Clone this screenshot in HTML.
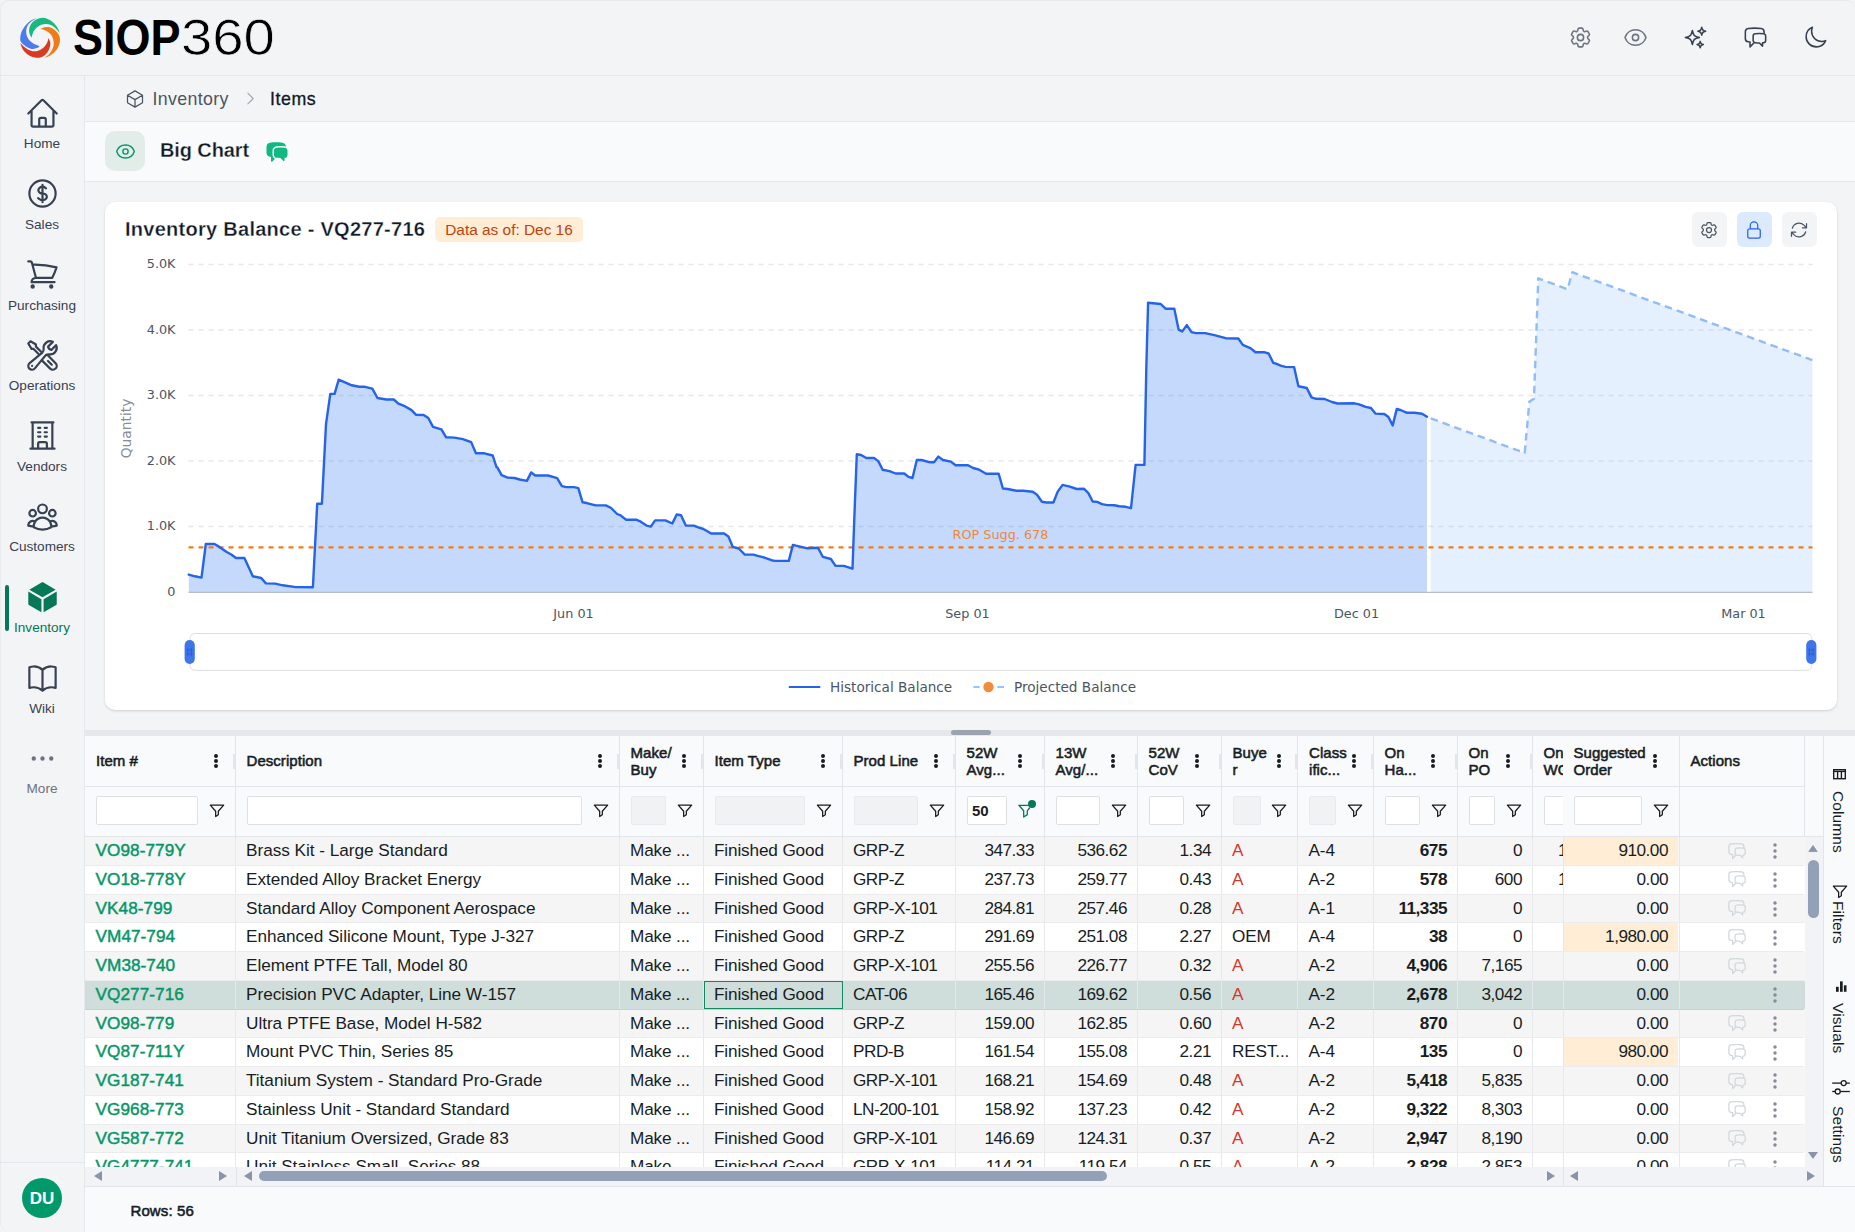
<!DOCTYPE html><html lang="en"><head><meta charset="utf-8"><title>SIOP360 - Inventory Items</title><style>
*{box-sizing:border-box;margin:0;padding:0}
html,body{width:1855px;height:1232px;overflow:hidden;background:#f3f4f6}
body{font-family:"Liberation Sans",sans-serif;color:#111827;position:relative}
.abs{position:absolute}
.ic{position:absolute;display:block;overflow:visible}
.t{position:absolute;white-space:nowrap;line-height:1}
#hdr{left:0;top:0;width:1855px;height:76px;border-bottom:1px solid #e5e7eb;background:#f3f4f6}
#side{left:0;top:76px;width:85px;height:1156px;border-right:1px solid #e5e7eb;background:#f3f4f6}
#crumb{left:85px;top:76px;width:1770px;height:46px;border-bottom:1px solid #e5e7eb;background:#f3f4f6}
#tbar{left:85px;top:122px;width:1770px;height:60px;border-bottom:1px solid #e5e7eb;background:#f9fafb}
#card{left:105px;top:202px;width:1732px;height:507.5px;background:#fff;border-radius:10px;box-shadow:0 1px 3px rgba(0,0,0,.10),0 1px 2px rgba(0,0,0,.06)}
.nl{position:absolute;left:0;width:84px;text-align:center;font-size:13.6px;line-height:16px;color:#374151;letter-spacing:0}
.cbtn{position:absolute;width:35px;height:35px;border-radius:6px;background:#f3f4f6}
.dj{font-family:"DejaVu Sans",sans-serif}
#grid{left:85px;top:736px;width:1738px;height:451px;background:#fff;overflow:hidden;font-size:17.2px;color:#181d1f}
.hc{position:absolute;top:0;height:51px;background:#f9fafb;border-right:1px solid #e2e5ea;border-bottom:1px solid #e2e5ea;font-size:15px;font-weight:400;-webkit-text-stroke:.55px #181d1f;line-height:17.2px;color:#181d1f;overflow:hidden}
.hc .lb{position:absolute;left:11px;top:0;height:50px;display:flex;align-items:center;white-space:pre;letter-spacing:.05px}
.hc .rz{position:absolute;right:0;top:17.5px;width:2px;height:15px;background:#e2e5ea}
.fc{position:absolute;top:51px;height:50px;background:#f9fafb;border-right:1px solid #e2e5ea;border-bottom:1px solid #e2e5ea;overflow:hidden}
.fi{position:absolute;left:11px;top:8.6px;height:29.6px;border:1px solid #dde1e6;border-radius:2px;background:#fff;font-size:15px;font-weight:700;line-height:28.6px;padding-left:4.5px;color:#181d1f}
.fi.dis{background:#f1f2f4;border-color:#e8eaed}
.row{position:absolute;left:0;width:1719px;height:28.75px}
.c{position:absolute;top:0;height:100%;border-right:1px solid #e6e8ec;padding:0 9.5px 0 10.5px;white-space:nowrap;overflow:hidden;line-height:27.9px;letter-spacing:-.15px}
.r{text-align:right;letter-spacing:-.5px}
.b{font-weight:700}
.pl{letter-spacing:-.5px}
.d{letter-spacing:-.03px}
.wo{padding-left:25.5px}
.g{color:#059669;font-weight:400;-webkit-text-stroke:.45px #059669;letter-spacing:.05px}
.red{color:#d4382c}
.sg{background:#ffedd5}
</style></head><body>
<div id="hdr" class="abs">
<svg class="ic" style="left:14px;top:12px;width:52px;height:52px" viewBox="0 0 1232 1232"><path d="M815,615C822,632 854,684 860,720C866,756 860,793 850,830C840,867 822,907 800,940C778,973 750,1007 720,1030C690,1053 657,1072 620,1080C583,1088 540,1087 500,1080C460,1073 418,1060 380,1040C342,1020 302,992 270,960C238,928 210,888 190,850C170,812 157,750 150,730C163,745 200,793 230,820C260,847 293,872 330,890C367,908 410,925 450,930C490,935 532,932 570,920C608,908 648,885 680,860C712,835 740,798 760,770C780,742 791,716 800,690C809,664 812,628 815,615Z" fill="#d93a24"/><path d="M620,405C637,398 682,368 720,360C758,352 810,350 850,360C890,370 927,393 960,420C993,447 1028,482 1050,520C1072,558 1088,603 1090,650C1092,697 1078,753 1060,800C1042,847 1013,892 980,930C947,968 903,1004 860,1030C817,1056 743,1076 720,1085C738,1071 800,1031 830,1000C860,969 882,937 900,900C918,863 935,822 940,780C945,738 940,690 930,650C920,610 903,572 880,540C857,508 820,480 790,460C760,440 728,429 700,420C672,411 633,408 620,405Z" fill="#f07c18"/><path d="M415,610C406,588 366,527 360,480C354,433 360,375 380,330C400,285 443,240 480,210C517,180 560,162 600,150C640,138 678,133 720,140C762,147 810,167 850,190C890,213 928,247 960,280C992,313 1019,353 1040,390C1061,427 1078,482 1085,500C1071,483 1031,430 1000,400C969,370 937,339 900,320C863,301 822,288 780,285C738,282 690,286 650,300C610,314 572,342 540,370C508,398 481,430 460,470C439,510 422,587 415,610Z" fill="#18b880"/><path d="M540,148C517,157 445,171 400,200C355,229 307,275 270,320C233,365 200,423 180,470C160,517 153,562 150,600C147,638 142,667 160,700C178,733 220,772 260,800C300,828 357,860 400,870C443,880 485,869 520,860C555,851 595,822 610,815C583,802 495,769 450,740C405,711 367,680 340,640C313,600 295,548 290,500C285,452 292,395 310,350C328,305 362,264 400,230C438,196 517,162 540,148Z" fill="#4a7cec"/></svg>
<div class="t" id="lg1" style="left:73px;top:10px;font-size:50px;line-height:56px;color:#000;font-weight:700;transform-origin:0 50%;transform:scaleX(.9)">SIOP</div>
<div class="t" id="lg2" style="left:181px;top:10px;font-size:50px;line-height:56px;color:#000;-webkit-text-stroke:.7px #f3f4f6;letter-spacing:0px;transform-origin:0 50%;transform:scaleX(1.125)">360</div>
<svg class="ic" style="left:1567.90px;top:25.00px;width:25px;height:25px" viewBox="0 0 24 24" fill="none" stroke="#6b7280" stroke-width="1.5" stroke-linecap="round" stroke-linejoin="round" ><path d="M9.594 3.94c.09-.542.56-.94 1.11-.94h2.593c.55 0 1.02.398 1.11.94l.213 1.281c.063.374.313.686.645.87.074.04.147.083.22.127.324.196.72.257 1.075.124l1.217-.456a1.125 1.125 0 011.37.49l1.296 2.247a1.125 1.125 0 01-.26 1.431l-1.003.827c-.293.24-.438.613-.431.992a6.759 6.759 0 010 .255c-.007.378.138.75.43.99l1.005.828c.424.35.534.954.26 1.43l-1.298 2.247a1.125 1.125 0 01-1.369.491l-1.217-.456c-.355-.133-.75-.072-1.076.124a6.57 6.57 0 01-.22.128c-.331.183-.581.495-.644.869l-.213 1.28c-.09.543-.56.941-1.11.941h-2.594c-.55 0-1.02-.398-1.11-.94l-.213-1.281c-.062-.374-.312-.686-.644-.87a6.52 6.52 0 01-.22-.127c-.325-.196-.72-.257-1.076-.124l-1.217.456a1.125 1.125 0 01-1.369-.49l-1.297-2.247a1.125 1.125 0 01.26-1.431l1.004-.827c.292-.24.437-.613.43-.992a6.932 6.932 0 010-.255c.007-.378-.138-.75-.43-.99l-1.004-.828a1.125 1.125 0 01-.26-1.43l1.297-2.247a1.125 1.125 0 011.37-.491l1.216.456c.356.133.751.072 1.076-.124.072-.044.146-.087.22-.128.332-.183.582-.495.644-.869l.214-1.281zM15 12a3 3 0 11-6 0 3 3 0 016 0z"/></svg>
<svg class="ic" style="left:1622.90px;top:25.00px;width:25px;height:25px" viewBox="0 0 24 24" fill="none" stroke="#6b7280" stroke-width="1.5" stroke-linecap="round" stroke-linejoin="round" ><path d="M2.036 12.322a1.012 1.012 0 010-.639C3.423 7.51 7.36 4.5 12 4.5c4.638 0 8.573 3.007 9.963 7.178.07.207.07.431 0 .639C20.577 16.49 16.64 19.5 12 19.5c-4.638 0-8.573-3.007-9.963-7.178zM15 12a3 3 0 11-6 0 3 3 0 016 0z"/></svg>
<svg class="ic" style="left:1682.90px;top:25.00px;width:25px;height:25px" viewBox="0 0 24 24" fill="none" stroke="#374151" stroke-width="1.5" stroke-linecap="round" stroke-linejoin="round" ><path d="M9.813 15.904L9 18.75l-.813-2.846a4.5 4.5 0 00-3.09-3.09L2.25 12l2.846-.813a4.5 4.5 0 003.09-3.09L9 5.25l.813 2.846a4.5 4.5 0 003.09 3.09L15.75 12l-2.846.813a4.5 4.5 0 00-3.09 3.09zM18.259 8.715L18 9.75l-.259-1.035a3.375 3.375 0 00-2.455-2.456L14.25 6l1.036-.259a3.375 3.375 0 002.455-2.456L18 2.25l.259 1.035a3.375 3.375 0 002.456 2.456L21.75 6l-1.035.259a3.375 3.375 0 00-2.456 2.456zM16.894 20.567L16.5 21.75l-.394-1.183a2.25 2.25 0 00-1.423-1.423L13.5 18.75l1.183-.394a2.25 2.25 0 001.423-1.423l.394-1.183.394 1.183a2.25 2.25 0 001.423 1.423l1.183.394-1.183.394a2.25 2.25 0 00-1.423 1.423z"/></svg>
<svg class="ic" style="left:1743.00px;top:25.00px;width:25px;height:25px" viewBox="0 0 24 24" fill="none" stroke="#374151" stroke-width="1.5" stroke-linecap="round" stroke-linejoin="round" ><path d="M20.25 8.511c.884.284 1.5 1.128 1.5 2.097v4.286c0 1.136-.847 2.1-1.98 2.193-.34.027-.68.052-1.02.072v3.091l-3-3c-1.354 0-2.694-.055-4.02-.163a2.115 2.115 0 01-.825-.242m9.345-8.334a2.126 2.126 0 00-.476-.095 48.64 48.64 0 00-8.048 0c-1.131.094-1.976 1.057-1.976 2.192v4.286c0 .837.46 1.58 1.155 1.951m9.345-8.334V6.637c0-1.621-1.152-3.026-2.76-3.235A48.455 48.455 0 0011.25 3c-2.115 0-4.198.137-6.24.402-1.608.209-2.76 1.614-2.76 3.235v6.226c0 1.621 1.152 3.026 2.76 3.235.577.075 1.157.14 1.74.194V21l4.155-4.155"/></svg>
<svg class="ic" style="left:1802.50px;top:25.00px;width:25px;height:25px" viewBox="0 0 24 24" fill="none" stroke="#374151" stroke-width="1.5" stroke-linecap="round" stroke-linejoin="round" ><path d="M21.752 15.002A9.718 9.718 0 0118 15.75c-5.385 0-9.75-4.365-9.75-9.75 0-1.33.266-2.597.748-3.752A9.753 9.753 0 003 11.25C3 16.635 7.365 21 12.75 21a9.753 9.753 0 009.002-5.998z"/></svg>
</div>
<div id="side" class="abs">
<svg class="ic" style="left:24.50px;top:19.60px;width:35px;height:35px" viewBox="0 0 24 24" fill="none" stroke="#374151" stroke-width="1.5" stroke-linecap="round" stroke-linejoin="round" ><path d="M2.25 12l8.954-8.955c.44-.439 1.152-.439 1.591 0L21.75 12M4.5 9.75v10.125c0 .621.504 1.125 1.125 1.125H9.75v-4.875c0-.621.504-1.125 1.125-1.125h2.25c.621 0 1.125.504 1.125 1.125V21h4.125c.621 0 1.125-.504 1.125-1.125V9.75M8.25 21h8.25"/></svg>
<div class="nl" style="top:60.4px;color:#374151">Home</div>
<svg class="ic" style="left:24.50px;top:100.30px;width:35px;height:35px" viewBox="0 0 24 24" fill="none" stroke="#374151" stroke-width="1.5" stroke-linecap="round" stroke-linejoin="round" ><path d="M12 6v12m-3-2.818l.879.659c1.171.879 3.07.879 4.242 0 1.172-.879 1.172-2.303 0-3.182C13.536 12.219 12.768 12 12 12c-.725 0-1.45-.22-2.003-.659-1.106-.879-1.106-2.303 0-3.182s2.9-.879 4.006 0l.415.33M21 12a9 9 0 11-18 0 9 9 0 0118 0z"/></svg>
<div class="nl" style="top:141.0px;color:#374151">Sales</div>
<svg class="ic" style="left:24.50px;top:181.00px;width:35px;height:35px" viewBox="0 0 24 24" fill="none" stroke="#374151" stroke-width="1.5" stroke-linecap="round" stroke-linejoin="round" ><path d="M2.25 3h1.386c.51 0 .955.343 1.087.835l.383 1.437M7.5 14.25a3 3 0 00-3 3h15.75m-12.75-3h11.218c1.121-2.3 2.1-4.684 2.924-7.138a60.114 60.114 0 00-16.536-1.84M7.5 14.25L5.106 5.272M6 20.25a.75.75 0 11-1.5 0 .75.75 0 011.5 0zm12.75 0a.75.75 0 11-1.5 0 .75.75 0 011.5 0z"/></svg>
<div class="nl" style="top:221.6px;color:#374151">Purchasing</div>
<svg class="ic" style="left:24.50px;top:261.70px;width:35px;height:35px" viewBox="0 0 24 24" fill="none" stroke="#374151" stroke-width="1.5" stroke-linecap="round" stroke-linejoin="round" ><path d="M11.42 15.17L17.25 21A2.652 2.652 0 0021 17.25l-5.877-5.877M11.42 15.17l2.496-3.03c.317-.384.74-.626 1.208-.766M11.42 15.17l-4.655 5.653a2.548 2.548 0 11-3.586-3.586l6.837-5.63m5.108-.233c.55-.164 1.163-.188 1.743-.14a4.5 4.5 0 004.486-6.336l-3.276 3.277a3.004 3.004 0 01-2.25-2.25l3.276-3.276a4.5 4.5 0 00-6.336 4.486c.091 1.076-.071 2.264-.904 2.95l-.102.085m-1.745 1.437L5.909 7.5H4.5L2.25 3.75l1.5-1.5L7.5 4.5v1.409l4.26 4.26m-1.745 1.437l1.745-1.437m6.615 8.206L15.75 15.75M4.867 19.125h.008v.008h-.008v-.008z"/></svg>
<div class="nl" style="top:302.1px;color:#374151">Operations</div>
<svg class="ic" style="left:24.50px;top:342.40px;width:35px;height:35px" viewBox="0 0 24 24" fill="none" stroke="#374151" stroke-width="1.5" stroke-linecap="round" stroke-linejoin="round" ><path d="M3.75 21h16.5M4.5 3h15M5.25 3v18m13.5-18v18M9 6.75h1.5m-1.5 3h1.5m-1.5 3h1.5m3-6H15m-1.5 3H15m-1.5 3H15M9 21v-3.375c0-.621.504-1.125 1.125-1.125h3.75c.621 0 1.125.504 1.125 1.125V21"/></svg>
<div class="nl" style="top:382.7px;color:#374151">Vendors</div>
<svg class="ic" style="left:24.50px;top:423.10px;width:35px;height:35px" viewBox="0 0 24 24" fill="none" stroke="#374151" stroke-width="1.5" stroke-linecap="round" stroke-linejoin="round" ><path d="M18 18.72a9.094 9.094 0 003.741-.479 3 3 0 00-4.682-2.72m.94 3.198l.001.031c0 .225-.012.447-.037.666A11.944 11.944 0 0112 21c-2.17 0-4.207-.576-5.963-1.584A6.062 6.062 0 016 18.719m12 0a5.971 5.971 0 00-.941-3.197m0 0A5.995 5.995 0 0012 12.75a5.995 5.995 0 00-5.058 2.772m0 0a3 3 0 00-4.681 2.72 8.986 8.986 0 003.74.477m.94-3.197a5.971 5.971 0 00-.94 3.197M15 6.75a3 3 0 11-6 0 3 3 0 016 0zm6 3a2.25 2.25 0 11-4.5 0 2.25 2.25 0 014.5 0zm-13.5 0a2.25 2.25 0 11-4.5 0 2.25 2.25 0 014.5 0z"/></svg>
<div class="nl" style="top:463.3px;color:#374151">Customers</div>
<svg class="ic" style="left:24.50px;top:503.80px;width:35px;height:35px" viewBox="0 0 24 24" fill="#047857" fill-rule="evenodd" ><path d="M12.378 1.602a.75.75 0 00-.756 0L3 6.632l9 5.25 9-5.25-8.622-5.03zM21.75 7.93l-9 5.25v9l8.628-5.032a.75.75 0 00.372-.648V7.93zM11.25 22.18v-9l-9-5.25v8.57a.75.75 0 00.372.648l8.628 5.033z"/></svg>
<div class="nl" style="top:543.9px;color:#047857">Inventory</div>
<div class="abs" style="left:5px;top:509.3px;width:4px;height:46px;border-radius:2px;background:#047857"></div>
<svg class="ic" style="left:24.50px;top:584.50px;width:35px;height:35px" viewBox="0 0 24 24" fill="none" stroke="#374151" stroke-width="1.5" stroke-linecap="round" stroke-linejoin="round" ><path d="M12 6.042A8.967 8.967 0 006 3.75c-1.052 0-2.062.18-3 .512v14.25A8.987 8.987 0 016 18c2.305 0 4.408.867 6 2.292m0-14.25a8.966 8.966 0 016-2.292c1.052 0 2.062.18 3 .512v14.25A8.987 8.987 0 0018 18a8.967 8.967 0 00-6 2.292m0-14.25v14.25"/></svg>
<div class="nl" style="top:624.5px;color:#374151">Wiki</div>
<svg class="ic" style="fill:#6b7280;left:24.50px;top:664.90px;width:35px;height:35px" viewBox="0 0 24 24" fill="none" stroke="#6b7280" stroke-width="1.5" stroke-linecap="round" stroke-linejoin="round"><path d="M6.75 12a.75.75 0 11-1.5 0 .75.75 0 011.5 0zM12.75 12a.75.75 0 11-1.5 0 .75.75 0 011.5 0zM18.75 12a.75.75 0 11-1.5 0 .75.75 0 011.5 0z"/></svg>
<div class="nl" style="top:705.0px;color:#6b7280">More</div>
<div class="abs" style="left:0;top:1086px;width:84px;height:1px;background:#e5e7eb"></div>
<div class="abs" style="left:22px;top:1102px;width:40px;height:40px;border-radius:50%;background:#019969;color:#fff;font-weight:700;font-size:17px;line-height:42px;text-align:center">DU</div>
</div>
<div id="crumb" class="abs">
<svg class="ic" style="left:40.00px;top:13.00px;width:20px;height:20px" viewBox="0 0 24 24" fill="none" stroke="#4b5563" stroke-width="1.5" stroke-linecap="round" stroke-linejoin="round" ><path d="M21 7.5l-9-5.25L3 7.5m18 0l-9 5.25m9-5.25v9l-9 5.25M3 7.5l9 5.25M3 7.5v9l9 5.25m0-9v9"/></svg>
<div class="t" id="bc1" style="left:67.5px;top:14px;font-size:17.8px;line-height:18px;color:#4b5563;letter-spacing:.35px">Inventory</div>
<svg class="ic" style="left:156.50px;top:14.00px;width:17px;height:17px" viewBox="0 0 24 24" fill="none" stroke="#9ca3af" stroke-width="1.5" stroke-linecap="round" stroke-linejoin="round" ><path d="M8.25 4.5l7.5 7.5-7.5 7.5"/></svg>
<div class="t" id="bc2" style="left:185px;top:14px;font-size:17.8px;line-height:18px;color:#111827;letter-spacing:.55px;-webkit-text-stroke:.3px #111827">Items</div>
</div>
<div id="tbar" class="abs">
<div class="abs" style="left:20px;top:9px;width:40px;height:40px;border-radius:10px;background:#e2ece9"></div>
<svg class="ic" style="left:29.50px;top:18.50px;width:21px;height:21px" viewBox="0 0 24 24" fill="none" stroke="#059669" stroke-width="1.6" stroke-linecap="round" stroke-linejoin="round" ><path d="M2.036 12.322a1.012 1.012 0 010-.639C3.423 7.51 7.36 4.5 12 4.5c4.638 0 8.573 3.007 9.963 7.178.07.207.07.431 0 .639C20.577 16.49 16.64 19.5 12 19.5c-4.638 0-8.573-3.007-9.963-7.178zM15 12a3 3 0 11-6 0 3 3 0 016 0z"/></svg>
<div class="t" id="bigchart" style="left:75px;top:17.2px;-webkit-text-stroke:.3px #f9fafb;font-size:20px;line-height:22px;font-weight:700;color:#111827;letter-spacing:-.1px">Big Chart</div>
<svg class="ic" style="left:180.30px;top:17.50px;width:24px;height:24px" viewBox="0 0 24 24" fill="#10b981" fill-rule="evenodd" ><path d="M4.913 2.658c2.075-.27 4.19-.408 6.337-.408 2.147 0 4.262.139 6.337.408 1.922.25 3.291 1.861 3.405 3.727a4.403 4.403 0 00-1.032-.211 50.89 50.89 0 00-8.42 0c-2.358.196-4.04 2.19-4.04 4.434v4.286a4.47 4.47 0 002.433 3.984L7.28 21.53A.75.75 0 016 21v-4.03a48.527 48.527 0 01-1.087-.128C2.905 16.58 1.5 14.833 1.5 12.862V6.638c0-1.97 1.405-3.718 3.413-3.979zM15.75 7.5c-1.376 0-2.739.057-4.086.169C10.124 7.797 9 9.103 9 10.609v4.285c0 1.507 1.128 2.814 2.67 2.94 1.243.102 2.5.157 3.768.165l2.782 2.781a.75.75 0 001.28-.53v-2.39l.33-.026c1.542-.125 2.67-1.433 2.67-2.94v-4.286c0-1.505-1.125-2.811-2.664-2.94A49.392 49.392 0 0015.75 7.5z"/></svg>
</div>
<div id="card" class="abs">
<div class="t" id="ctitle" style="left:20px;top:16.4px;-webkit-text-stroke:.3px #fff;font-size:20px;line-height:22px;font-weight:700;color:#111827;letter-spacing:.27px">Inventory Balance - VQ277-716</div>
<div class="abs" id="badge" style="left:330px;top:15px;width:148px;height:25px;border-radius:5px;background:#ffedd5;color:#c2410c;font-size:15.4px;line-height:25px;text-align:center;white-space:nowrap">Data as of: Dec 16</div>
<div class="cbtn" style="left:1586.75px;top:10px;background:#f3f4f6"></div>
<svg class="ic" style="left:1594.25px;top:17.50px;width:20px;height:20px" viewBox="0 0 24 24" fill="none" stroke="#4b5563" stroke-width="1.5" stroke-linecap="round" stroke-linejoin="round" ><path d="M9.594 3.94c.09-.542.56-.94 1.11-.94h2.593c.55 0 1.02.398 1.11.94l.213 1.281c.063.374.313.686.645.87.074.04.147.083.22.127.324.196.72.257 1.075.124l1.217-.456a1.125 1.125 0 011.37.49l1.296 2.247a1.125 1.125 0 01-.26 1.431l-1.003.827c-.293.24-.438.613-.431.992a6.759 6.759 0 010 .255c-.007.378.138.75.43.99l1.005.828c.424.35.534.954.26 1.43l-1.298 2.247a1.125 1.125 0 01-1.369.491l-1.217-.456c-.355-.133-.75-.072-1.076.124a6.57 6.57 0 01-.22.128c-.331.183-.581.495-.644.869l-.213 1.28c-.09.543-.56.941-1.11.941h-2.594c-.55 0-1.02-.398-1.11-.94l-.213-1.281c-.062-.374-.312-.686-.644-.87a6.52 6.52 0 01-.22-.127c-.325-.196-.72-.257-1.076-.124l-1.217.456a1.125 1.125 0 01-1.369-.49l-1.297-2.247a1.125 1.125 0 01.26-1.431l1.004-.827c.292-.24.437-.613.43-.992a6.932 6.932 0 010-.255c.007-.378-.138-.75-.43-.99l-1.004-.828a1.125 1.125 0 01-.26-1.43l1.297-2.247a1.125 1.125 0 011.37-.491l1.216.456c.356.133.751.072 1.076-.124.072-.044.146-.087.22-.128.332-.183.582-.495.644-.869l.214-1.281zM15 12a3 3 0 11-6 0 3 3 0 016 0z"/></svg>
<div class="cbtn" style="left:1631.75px;top:10px;background:#dbeafe"></div>
<svg class="ic" style="left:1639.25px;top:17.50px;width:20px;height:20px" viewBox="0 0 24 24" fill="none" stroke="#2563eb" stroke-width="1.5" stroke-linecap="round" stroke-linejoin="round" ><path d="M16.5 10.5V6.75a4.5 4.5 0 10-9 0v3.75m-.75 11.25h10.5a2.25 2.25 0 002.25-2.25v-6.75a2.25 2.25 0 00-2.25-2.25H6.75a2.25 2.25 0 00-2.25 2.25v6.75a2.25 2.25 0 002.25 2.25z"/></svg>
<div class="cbtn" style="left:1676.75px;top:10px;background:#f3f4f6"></div>
<svg class="ic" style="left:1684.25px;top:17.50px;width:20px;height:20px" viewBox="0 0 24 24" fill="none" stroke="#4b5563" stroke-width="1.5" stroke-linecap="round" stroke-linejoin="round" ><path d="M16.023 9.348h4.992v-.001M2.985 19.644v-4.992m0 0h4.992m-4.993 0l3.181 3.183a8.25 8.25 0 0013.803-3.7M4.031 9.865a8.25 8.25 0 0113.803-3.7l3.181 3.182m0-4.991v4.99"/></svg>
</div>
<svg class="ic" style="left:0;top:0;width:1855px;height:1232px;pointer-events:none" viewBox="0 0 1855 1232">
<line x1="188.5" x2="1812.5" y1="526.5" y2="526.5" stroke="#e5e7eb" stroke-width="1.3" stroke-dasharray="5 5"/>
<line x1="188.5" x2="1812.5" y1="461.0" y2="461.0" stroke="#e5e7eb" stroke-width="1.3" stroke-dasharray="5 5"/>
<line x1="188.5" x2="1812.5" y1="395.5" y2="395.5" stroke="#e5e7eb" stroke-width="1.3" stroke-dasharray="5 5"/>
<line x1="188.5" x2="1812.5" y1="330.0" y2="330.0" stroke="#e5e7eb" stroke-width="1.3" stroke-dasharray="5 5"/>
<line x1="188.5" x2="1812.5" y1="264.5" y2="264.5" stroke="#e5e7eb" stroke-width="1.3" stroke-dasharray="5 5"/>
<path d="M188.8,574.6 L194.9,576.3 L201.5,577.6 L205.8,544.0 L214.5,544.0 L220.1,547.4 L226.7,552.0 L231.3,554.5 L236.0,558.0 L244.4,558.0 L252.8,576.3 L261.2,578.0 L265.9,583.4 L275.2,583.6 L282.7,585.3 L295.8,587.1 L312.9,587.3 L317.2,503.7 L321.9,503.7 L326.0,424.1 L330.3,393.9 L334.6,393.9 L338.7,379.7 L351.8,385.3 L359.2,386.8 L364.8,386.8 L372.3,388.7 L377.5,398.0 L386.3,399.5 L393.8,399.5 L398.4,403.6 L404.0,405.8 L411.5,410.1 L416.2,414.8 L423.6,415.0 L428.3,418.0 L433.0,426.9 L441.4,429.4 L446.0,437.2 L454.4,437.6 L462.8,439.1 L471.2,442.1 L475.9,453.3 L484.3,453.3 L492.7,455.5 L496.5,467.1 L497.3,467.4 L501.6,475.2 L507.6,477.6 L514.5,478.0 L519.7,479.5 L526.9,480.9 L531.2,472.4 L535.2,475.5 L548.1,475.5 L557.1,478.1 L561.9,486.1 L566.3,487.1 L574.0,487.1 L578.3,488.1 L582.6,502.3 L587.8,503.3 L595.6,505.4 L605.9,505.4 L611.1,508.0 L617.1,514.0 L620.6,515.4 L626.1,519.7 L636.1,519.7 L639.6,521.1 L646.5,525.6 L650.8,526.6 L655.1,520.4 L665.4,520.4 L672.3,523.5 L676.7,514.5 L681.0,515.2 L685.8,525.6 L693.9,525.6 L698.2,527.3 L703.4,529.0 L711.2,533.5 L724.1,533.5 L728.4,536.4 L732.7,546.8 L738.8,548.5 L744.8,554.6 L753.4,554.6 L757.7,555.9 L762.9,557.1 L771.5,560.2 L775.0,560.9 L788.8,560.9 L792.9,544.9 L799.0,546.3 L807.6,548.3 L818.0,547.7 L822.8,556.8 L830.9,559.0 L835.5,565.9 L843.8,565.9 L852.5,568.7 L854.5,513.2 L856.8,454.2 L861.1,455.0 L866.3,458.0 L874.0,458.0 L878.3,461.1 L882.6,469.7 L889.5,471.1 L895.6,473.5 L904.2,473.5 L908.5,476.9 L912.5,478.0 L916.8,460.0 L921.5,460.0 L930.1,462.3 L934.0,462.3 L938.4,456.6 L943.0,460.0 L950.8,461.6 L955.6,465.2 L968.0,465.2 L973.2,468.0 L979.2,469.7 L986.1,473.8 L998.7,473.8 L1002.9,488.5 L1007.7,489.0 L1016.3,490.7 L1023.2,490.7 L1032.7,491.8 L1037.0,494.7 L1041.9,501.8 L1046.5,502.5 L1053.4,502.5 L1057.7,491.6 L1062.6,484.9 L1069.8,486.6 L1076.7,489.0 L1084.1,488.8 L1088.4,493.1 L1092.7,501.5 L1097.2,501.9 L1102.0,504.1 L1107.1,505.1 L1114.5,505.3 L1119.2,506.2 L1125.7,506.8 L1131.0,508.1 L1135.6,464.9 L1144.4,464.9 L1146.3,368.4 L1148.1,302.7 L1160.7,304.0 L1165.5,308.7 L1174.3,308.7 L1178.6,329.6 L1182.3,331.4 L1186.8,325.1 L1191.5,332.2 L1195.8,333.1 L1205.1,333.1 L1214.4,335.2 L1225.6,338.2 L1238.3,338.5 L1242.8,344.9 L1250.8,348.4 L1255.5,352.2 L1263.9,352.2 L1268.6,353.5 L1273.2,362.8 L1276.0,363.6 L1280.7,365.6 L1285.4,366.9 L1294.1,367.1 L1298.4,386.3 L1306.8,388.0 L1311.5,397.4 L1316.2,398.8 L1324.6,399.0 L1332.0,402.0 L1337.6,403.5 L1354.4,403.3 L1359.1,404.3 L1365.6,406.9 L1370.9,408.0 L1375.4,413.6 L1384.3,414.0 L1388.4,417.0 L1392.7,425.4 L1396.8,408.9 L1396.8,409.0 L1400.5,410.0 L1407.1,412.8 L1414.5,412.8 L1422.0,413.7 L1427.0,416.7 L1427.0,592.0 L188.8,592.0Z" fill="#3b82f6" fill-opacity=".3"/>
<path d="M1430.8,418.4 L1524.7,452.9 L1529.4,401.6 L1534.0,398.8 L1538.3,278.3 L1567.6,289.2 L1572.3,272.2 L1812.3,360.1 L1812.3,592.0 L1430.8,592.0Z" fill="#93c5fd" fill-opacity=".25"/>
<line x1="188.5" x2="1812.5" y1="592.3" y2="592.3" stroke="#b8bdc6" stroke-width="1.2"/>
<line x1="188.5" x2="1812.5" y1="547.4" y2="547.4" stroke="#ed7d1f" stroke-width="2.3" stroke-dasharray="5 5"/>
<path d="M188.8,574.6 L194.9,576.3 L201.5,577.6 L205.8,544.0 L214.5,544.0 L220.1,547.4 L226.7,552.0 L231.3,554.5 L236.0,558.0 L244.4,558.0 L252.8,576.3 L261.2,578.0 L265.9,583.4 L275.2,583.6 L282.7,585.3 L295.8,587.1 L312.9,587.3 L317.2,503.7 L321.9,503.7 L326.0,424.1 L330.3,393.9 L334.6,393.9 L338.7,379.7 L351.8,385.3 L359.2,386.8 L364.8,386.8 L372.3,388.7 L377.5,398.0 L386.3,399.5 L393.8,399.5 L398.4,403.6 L404.0,405.8 L411.5,410.1 L416.2,414.8 L423.6,415.0 L428.3,418.0 L433.0,426.9 L441.4,429.4 L446.0,437.2 L454.4,437.6 L462.8,439.1 L471.2,442.1 L475.9,453.3 L484.3,453.3 L492.7,455.5 L496.5,467.1 L497.3,467.4 L501.6,475.2 L507.6,477.6 L514.5,478.0 L519.7,479.5 L526.9,480.9 L531.2,472.4 L535.2,475.5 L548.1,475.5 L557.1,478.1 L561.9,486.1 L566.3,487.1 L574.0,487.1 L578.3,488.1 L582.6,502.3 L587.8,503.3 L595.6,505.4 L605.9,505.4 L611.1,508.0 L617.1,514.0 L620.6,515.4 L626.1,519.7 L636.1,519.7 L639.6,521.1 L646.5,525.6 L650.8,526.6 L655.1,520.4 L665.4,520.4 L672.3,523.5 L676.7,514.5 L681.0,515.2 L685.8,525.6 L693.9,525.6 L698.2,527.3 L703.4,529.0 L711.2,533.5 L724.1,533.5 L728.4,536.4 L732.7,546.8 L738.8,548.5 L744.8,554.6 L753.4,554.6 L757.7,555.9 L762.9,557.1 L771.5,560.2 L775.0,560.9 L788.8,560.9 L792.9,544.9 L799.0,546.3 L807.6,548.3 L818.0,547.7 L822.8,556.8 L830.9,559.0 L835.5,565.9 L843.8,565.9 L852.5,568.7 L854.5,513.2 L856.8,454.2 L861.1,455.0 L866.3,458.0 L874.0,458.0 L878.3,461.1 L882.6,469.7 L889.5,471.1 L895.6,473.5 L904.2,473.5 L908.5,476.9 L912.5,478.0 L916.8,460.0 L921.5,460.0 L930.1,462.3 L934.0,462.3 L938.4,456.6 L943.0,460.0 L950.8,461.6 L955.6,465.2 L968.0,465.2 L973.2,468.0 L979.2,469.7 L986.1,473.8 L998.7,473.8 L1002.9,488.5 L1007.7,489.0 L1016.3,490.7 L1023.2,490.7 L1032.7,491.8 L1037.0,494.7 L1041.9,501.8 L1046.5,502.5 L1053.4,502.5 L1057.7,491.6 L1062.6,484.9 L1069.8,486.6 L1076.7,489.0 L1084.1,488.8 L1088.4,493.1 L1092.7,501.5 L1097.2,501.9 L1102.0,504.1 L1107.1,505.1 L1114.5,505.3 L1119.2,506.2 L1125.7,506.8 L1131.0,508.1 L1135.6,464.9 L1144.4,464.9 L1146.3,368.4 L1148.1,302.7 L1160.7,304.0 L1165.5,308.7 L1174.3,308.7 L1178.6,329.6 L1182.3,331.4 L1186.8,325.1 L1191.5,332.2 L1195.8,333.1 L1205.1,333.1 L1214.4,335.2 L1225.6,338.2 L1238.3,338.5 L1242.8,344.9 L1250.8,348.4 L1255.5,352.2 L1263.9,352.2 L1268.6,353.5 L1273.2,362.8 L1276.0,363.6 L1280.7,365.6 L1285.4,366.9 L1294.1,367.1 L1298.4,386.3 L1306.8,388.0 L1311.5,397.4 L1316.2,398.8 L1324.6,399.0 L1332.0,402.0 L1337.6,403.5 L1354.4,403.3 L1359.1,404.3 L1365.6,406.9 L1370.9,408.0 L1375.4,413.6 L1384.3,414.0 L1388.4,417.0 L1392.7,425.4 L1396.8,408.9 L1396.8,409.0 L1400.5,410.0 L1407.1,412.8 L1414.5,412.8 L1422.0,413.7 L1427.0,416.7" fill="none" stroke="#2563eb" stroke-width="2.4" stroke-linejoin="round" stroke-linecap="round"/>
<path d="M1430.8,418.4 L1524.7,452.9 L1529.4,401.6 L1534.0,398.8 L1538.3,278.3 L1567.6,289.2 L1572.3,272.2 L1812.3,360.1" fill="none" stroke="#93bbf6" stroke-width="2.4" stroke-dasharray="7.5 5" stroke-linejoin="round"/>
<g class="dj" font-family="DejaVu Sans, sans-serif" font-size="12.8" fill="#4b5563">
<text x="175.5" y="268.1" text-anchor="end">5.0K</text>
<text x="175.5" y="333.6" text-anchor="end">4.0K</text>
<text x="175.5" y="399.1" text-anchor="end">3.0K</text>
<text x="175.5" y="464.6" text-anchor="end">2.0K</text>
<text x="175.5" y="530.1" text-anchor="end">1.0K</text>
<text x="175.5" y="595.6" text-anchor="end">0</text>
<text x="573.5" y="617.8" text-anchor="middle">Jun 01</text>
<text x="967.5" y="617.8" text-anchor="middle">Sep 01</text>
<text x="1356.5" y="617.8" text-anchor="middle">Dec 01</text>
<text x="1743.5" y="617.8" text-anchor="middle">Mar 01</text>
</g>
<text font-family="DejaVu Sans, sans-serif" font-size="13.8" fill="#858c98" text-anchor="middle" transform="translate(130.5,428.5) rotate(-90)">Quantity</text>
<text font-family="DejaVu Sans, sans-serif" font-size="12.8" fill="#ed8936" text-anchor="middle" x="1000.5" y="539">ROP Sugg. 678</text>
<rect x="190" y="633.5" width="1621.8" height="36.8" rx="5" fill="#fff" stroke="#dcdee2" stroke-width="1"/>
<rect x="184.6" y="639.9" width="10.2" height="24" rx="5.1" fill="#3f75ec"/>
<g stroke="#2f5fd4" stroke-width="1"><line x1="187.89999999999998" y1="648" x2="187.89999999999998" y2="656"/><line x1="191.5" y1="648" x2="191.5" y2="656"/><line x1="186.7" y1="650" x2="192.7" y2="650"/><line x1="186.7" y1="654" x2="192.7" y2="654"/></g>
<rect x="1806.2" y="639.9" width="10.2" height="24" rx="5.1" fill="#3f75ec"/>
<g stroke="#2f5fd4" stroke-width="1"><line x1="1809.5" y1="648" x2="1809.5" y2="656"/><line x1="1813.1" y1="648" x2="1813.1" y2="656"/><line x1="1808.3" y1="650" x2="1814.3" y2="650"/><line x1="1808.3" y1="654" x2="1814.3" y2="654"/></g>
<line x1="788.8" x2="820.3" y1="687" y2="687" stroke="#2563eb" stroke-width="2.2"/>
<text font-family="DejaVu Sans, sans-serif" font-size="13.6" fill="#4b5563" x="830" y="691.6">Historical Balance</text>
<line x1="973.4" x2="979.6" y1="687" y2="687" stroke="#93c5fd" stroke-width="2"/><line x1="997.4" x2="1004" y1="687" y2="687" stroke="#93c5fd" stroke-width="2"/>
<circle cx="988.5" cy="687" r="5.2" fill="#f08c3e"/>
<text font-family="DejaVu Sans, sans-serif" font-size="13.6" fill="#4b5563" x="1014" y="691.6">Projected Balance</text>
</svg>
<div class="abs" style="left:85px;top:730px;width:1770px;height:6px;background:#e5e7eb"></div>
<div class="abs" style="left:951px;top:729.5px;width:40px;height:5px;border-radius:3px;background:#9ca3af"></div>
<div id="grid" class="abs">
<div class="hc" style="left:0px;width:150.5px"><div class="lb">Item #</div><svg class="ic" style="left:127.0px;top:15.3px;width:8px;height:20px" viewBox="-4 -10 8 20"><circle cx="0" cy="-5.1" r="2.0" fill="#181d1f"/><circle cx="0" cy="0" r="2.0" fill="#181d1f"/><circle cx="0" cy="5.1" r="2.0" fill="#181d1f"/></svg><div class="rz"></div></div>
<div class="fc" style="left:0px;width:150.5px">
<div class="fi" style="width:102.0px"></div>
<svg class="ic" style="left:123.50px;top:16.00px;width:16px;height:16px" viewBox="0 0 24 24" fill="none" stroke="#181d1f" stroke-width="1.9" stroke-linejoin="round"><polygon points="2,3.2 22,3.2 14,12.4 14,17.6 10,20.2 10,12.4"/></svg>
</div>
<div class="hc" style="left:150.5px;width:384.0px"><div class="lb">Description</div><svg class="ic" style="left:360.5px;top:15.3px;width:8px;height:20px" viewBox="-4 -10 8 20"><circle cx="0" cy="-5.1" r="2.0" fill="#181d1f"/><circle cx="0" cy="0" r="2.0" fill="#181d1f"/><circle cx="0" cy="5.1" r="2.0" fill="#181d1f"/></svg><div class="rz"></div></div>
<div class="fc" style="left:150.5px;width:384.0px">
<div class="fi" style="width:335.5px"></div>
<svg class="ic" style="left:357.00px;top:16.00px;width:16px;height:16px" viewBox="0 0 24 24" fill="none" stroke="#181d1f" stroke-width="1.9" stroke-linejoin="round"><polygon points="2,3.2 22,3.2 14,12.4 14,17.6 10,20.2 10,12.4"/></svg>
</div>
<div class="hc" style="left:534.5px;width:84.0px"><div class="lb">Make/
Buy</div><svg class="ic" style="left:60.5px;top:15.3px;width:8px;height:20px" viewBox="-4 -10 8 20"><circle cx="0" cy="-5.1" r="2.0" fill="#181d1f"/><circle cx="0" cy="0" r="2.0" fill="#181d1f"/><circle cx="0" cy="5.1" r="2.0" fill="#181d1f"/></svg><div class="rz"></div></div>
<div class="fc" style="left:534.5px;width:84.0px">
<div class="fi dis" style="width:35.5px"></div>
<svg class="ic" style="left:57.00px;top:16.00px;width:16px;height:16px" viewBox="0 0 24 24" fill="none" stroke="#181d1f" stroke-width="1.9" stroke-linejoin="round"><polygon points="2,3.2 22,3.2 14,12.4 14,17.6 10,20.2 10,12.4"/></svg>
</div>
<div class="hc" style="left:618.5px;width:139.0px"><div class="lb">Item Type</div><svg class="ic" style="left:115.5px;top:15.3px;width:8px;height:20px" viewBox="-4 -10 8 20"><circle cx="0" cy="-5.1" r="2.0" fill="#181d1f"/><circle cx="0" cy="0" r="2.0" fill="#181d1f"/><circle cx="0" cy="5.1" r="2.0" fill="#181d1f"/></svg><div class="rz"></div></div>
<div class="fc" style="left:618.5px;width:139.0px">
<div class="fi dis" style="width:90.5px"></div>
<svg class="ic" style="left:112.00px;top:16.00px;width:16px;height:16px" viewBox="0 0 24 24" fill="none" stroke="#181d1f" stroke-width="1.9" stroke-linejoin="round"><polygon points="2,3.2 22,3.2 14,12.4 14,17.6 10,20.2 10,12.4"/></svg>
</div>
<div class="hc" style="left:757.5px;width:113.0px"><div class="lb">Prod Line</div><svg class="ic" style="left:89.5px;top:15.3px;width:8px;height:20px" viewBox="-4 -10 8 20"><circle cx="0" cy="-5.1" r="2.0" fill="#181d1f"/><circle cx="0" cy="0" r="2.0" fill="#181d1f"/><circle cx="0" cy="5.1" r="2.0" fill="#181d1f"/></svg><div class="rz"></div></div>
<div class="fc" style="left:757.5px;width:113.0px">
<div class="fi dis" style="width:64.5px"></div>
<svg class="ic" style="left:86.00px;top:16.00px;width:16px;height:16px" viewBox="0 0 24 24" fill="none" stroke="#181d1f" stroke-width="1.9" stroke-linejoin="round"><polygon points="2,3.2 22,3.2 14,12.4 14,17.6 10,20.2 10,12.4"/></svg>
</div>
<div class="hc" style="left:870.5px;width:89.0px"><div class="lb">52W
Avg...</div><svg class="ic" style="left:60.5px;top:15.3px;width:8px;height:20px" viewBox="-4 -10 8 20"><circle cx="0" cy="-5.1" r="2.0" fill="#181d1f"/><circle cx="0" cy="0" r="2.0" fill="#181d1f"/><circle cx="0" cy="5.1" r="2.0" fill="#181d1f"/></svg><div class="rz"></div></div>
<div class="fc" style="left:870.5px;width:89.0px">
<div class="fi" style="width:40.5px">50</div>
<svg class="ic" style="left:58.50px;top:9.00px;width:24px;height:24px" viewBox="0 0 24 24" fill="none" stroke="#047857" stroke-width="1.3" stroke-linejoin="round" stroke-linecap="round"><path d="M4.9,9.3 H14 M4.9,9.3 L9.7,14.8 V21 L13.3,18.6 V14.8 L15.5,12"/><circle cx="18" cy="7.9" r="4" fill="#047857" stroke="none"/></svg>
</div>
<div class="hc" style="left:959.5px;width:93.0px"><div class="lb">13W
Avg/...</div><svg class="ic" style="left:64.5px;top:15.3px;width:8px;height:20px" viewBox="-4 -10 8 20"><circle cx="0" cy="-5.1" r="2.0" fill="#181d1f"/><circle cx="0" cy="0" r="2.0" fill="#181d1f"/><circle cx="0" cy="5.1" r="2.0" fill="#181d1f"/></svg><div class="rz"></div></div>
<div class="fc" style="left:959.5px;width:93.0px">
<div class="fi" style="width:44.5px"></div>
<svg class="ic" style="left:66.00px;top:16.00px;width:16px;height:16px" viewBox="0 0 24 24" fill="none" stroke="#181d1f" stroke-width="1.9" stroke-linejoin="round"><polygon points="2,3.2 22,3.2 14,12.4 14,17.6 10,20.2 10,12.4"/></svg>
</div>
<div class="hc" style="left:1052.5px;width:84.0px"><div class="lb">52W
CoV</div><svg class="ic" style="left:55.5px;top:15.3px;width:8px;height:20px" viewBox="-4 -10 8 20"><circle cx="0" cy="-5.1" r="2.0" fill="#181d1f"/><circle cx="0" cy="0" r="2.0" fill="#181d1f"/><circle cx="0" cy="5.1" r="2.0" fill="#181d1f"/></svg><div class="rz"></div></div>
<div class="fc" style="left:1052.5px;width:84.0px">
<div class="fi" style="width:35.5px"></div>
<svg class="ic" style="left:57.00px;top:16.00px;width:16px;height:16px" viewBox="0 0 24 24" fill="none" stroke="#181d1f" stroke-width="1.9" stroke-linejoin="round"><polygon points="2,3.2 22,3.2 14,12.4 14,17.6 10,20.2 10,12.4"/></svg>
</div>
<div class="hc" style="left:1136.5px;width:76.5px"><div class="lb">Buye
r</div><svg class="ic" style="left:53.0px;top:15.3px;width:8px;height:20px" viewBox="-4 -10 8 20"><circle cx="0" cy="-5.1" r="2.0" fill="#181d1f"/><circle cx="0" cy="0" r="2.0" fill="#181d1f"/><circle cx="0" cy="5.1" r="2.0" fill="#181d1f"/></svg><div class="rz"></div></div>
<div class="fc" style="left:1136.5px;width:76.5px">
<div class="fi dis" style="width:28.0px"></div>
<svg class="ic" style="left:49.50px;top:16.00px;width:16px;height:16px" viewBox="0 0 24 24" fill="none" stroke="#181d1f" stroke-width="1.9" stroke-linejoin="round"><polygon points="2,3.2 22,3.2 14,12.4 14,17.6 10,20.2 10,12.4"/></svg>
</div>
<div class="hc" style="left:1213px;width:75.5px"><div class="lb">Class
ific...</div><svg class="ic" style="left:52.0px;top:15.3px;width:8px;height:20px" viewBox="-4 -10 8 20"><circle cx="0" cy="-5.1" r="2.0" fill="#181d1f"/><circle cx="0" cy="0" r="2.0" fill="#181d1f"/><circle cx="0" cy="5.1" r="2.0" fill="#181d1f"/></svg><div class="rz"></div></div>
<div class="fc" style="left:1213px;width:75.5px">
<div class="fi dis" style="width:27.0px"></div>
<svg class="ic" style="left:48.50px;top:16.00px;width:16px;height:16px" viewBox="0 0 24 24" fill="none" stroke="#181d1f" stroke-width="1.9" stroke-linejoin="round"><polygon points="2,3.2 22,3.2 14,12.4 14,17.6 10,20.2 10,12.4"/></svg>
</div>
<div class="hc" style="left:1288.5px;width:84.0px"><div class="lb">On
Ha...</div><svg class="ic" style="left:55.5px;top:15.3px;width:8px;height:20px" viewBox="-4 -10 8 20"><circle cx="0" cy="-5.1" r="2.0" fill="#181d1f"/><circle cx="0" cy="0" r="2.0" fill="#181d1f"/><circle cx="0" cy="5.1" r="2.0" fill="#181d1f"/></svg><div class="rz"></div></div>
<div class="fc" style="left:1288.5px;width:84.0px">
<div class="fi" style="width:35.5px"></div>
<svg class="ic" style="left:57.00px;top:16.00px;width:16px;height:16px" viewBox="0 0 24 24" fill="none" stroke="#181d1f" stroke-width="1.9" stroke-linejoin="round"><polygon points="2,3.2 22,3.2 14,12.4 14,17.6 10,20.2 10,12.4"/></svg>
</div>
<div class="hc" style="left:1372.5px;width:75.0px"><div class="lb">On
PO</div><svg class="ic" style="left:46.5px;top:15.3px;width:8px;height:20px" viewBox="-4 -10 8 20"><circle cx="0" cy="-5.1" r="2.0" fill="#181d1f"/><circle cx="0" cy="0" r="2.0" fill="#181d1f"/><circle cx="0" cy="5.1" r="2.0" fill="#181d1f"/></svg><div class="rz"></div></div>
<div class="fc" style="left:1372.5px;width:75.0px">
<div class="fi" style="width:26.5px"></div>
<svg class="ic" style="left:48.00px;top:16.00px;width:16px;height:16px" viewBox="0 0 24 24" fill="none" stroke="#181d1f" stroke-width="1.9" stroke-linejoin="round"><polygon points="2,3.2 22,3.2 14,12.4 14,17.6 10,20.2 10,12.4"/></svg>
</div>
<div class="hc" style="left:1447.5px;width:87.5px"><div class="lb">On
WO</div><svg class="ic" style="left:59.0px;top:15.3px;width:8px;height:20px" viewBox="-4 -10 8 20"><circle cx="0" cy="-5.1" r="2.0" fill="#181d1f"/><circle cx="0" cy="0" r="2.0" fill="#181d1f"/><circle cx="0" cy="5.1" r="2.0" fill="#181d1f"/></svg><div class="rz"></div></div>
<div class="fc" style="left:1447.5px;width:87.5px">
<div class="fi" style="width:39.0px"></div>
<svg class="ic" style="left:60.50px;top:16.00px;width:16px;height:16px" viewBox="0 0 24 24" fill="none" stroke="#181d1f" stroke-width="1.9" stroke-linejoin="round"><polygon points="2,3.2 22,3.2 14,12.4 14,17.6 10,20.2 10,12.4"/></svg>
</div>
<div class="abs" style="left:1477.5px;top:0;width:261.5px;height:101px;background:#f9fafb;border-left:1px solid #e2e5ea"></div>
<div class="hc" style="left:1477.5px;width:117.0px"><div class="lb">Suggested
Order</div><svg class="ic" style="left:88.5px;top:15.3px;width:8px;height:20px" viewBox="-4 -10 8 20"><circle cx="0" cy="-5.1" r="2.0" fill="#181d1f"/><circle cx="0" cy="0" r="2.0" fill="#181d1f"/><circle cx="0" cy="5.1" r="2.0" fill="#181d1f"/></svg></div>
<div class="fc" style="left:1477.5px;width:117.0px">
<div class="fi" style="width:68.5px"></div>
<svg class="ic" style="left:90.00px;top:16.00px;width:16px;height:16px" viewBox="0 0 24 24" fill="none" stroke="#181d1f" stroke-width="1.9" stroke-linejoin="round"><polygon points="2,3.2 22,3.2 14,12.4 14,17.6 10,20.2 10,12.4"/></svg>
</div>
<div class="hc" style="left:1594.5px;width:125.0px"><div class="lb">Actions</div></div>
<div class="fc" style="left:1594.5px;width:125.0px">
</div>
<div class="abs" style="left:1719.5px;top:0;width:19.5px;height:101px;background:#f9fafb;border-bottom:1px solid #e2e5ea"></div>
<div class="abs" id="body" style="left:0;top:101px;width:1739px;height:330px;overflow:hidden">
<div class="row" style="top:0.00px;background:#f5f5f5;border-bottom:1px solid #ececee">
<div class="c g" style="left:0px;width:150.5px">VO98-779Y</div>
<div class="c d" style="left:150.5px;width:384.0px">Brass Kit - Large Standard</div>
<div class="c " style="left:534.5px;width:84.0px">Make ...</div>
<div class="c " style="left:618.5px;width:139.0px">Finished Good</div>
<div class="c pl" style="left:757.5px;width:113.0px">GRP-Z</div>
<div class="c r" style="left:870.5px;width:89.0px">347.33</div>
<div class="c r" style="left:959.5px;width:93.0px">536.62</div>
<div class="c r" style="left:1052.5px;width:84.0px">1.34</div>
<div class="c red" style="left:1136.5px;width:76.5px">A</div>
<div class="c " style="left:1213px;width:75.5px">A-4</div>
<div class="c r b" style="left:1288.5px;width:84.0px">675</div>
<div class="c r" style="left:1372.5px;width:75.0px">0</div>
<div class="c wo" style="left:1447.5px;width:87.5px">1</div>
<div class="c r" style="left:1477.5px;width:117.0px;background:#f5f5f5;border-left:1px solid #e6e8ec;padding:0"><div style="position:absolute;left:-1px;top:0;right:1px;bottom:0;background:#ffedd5;padding-right:9.5px">910.00</div></div>
<div class="c" style="left:1594.5px;width:125.0px;background:#f5f5f5;border-right:none">
<svg class="ic" style="left:47.5px;top:3.5px;width:20px;height:20px" viewBox="0 0 24 24" fill="none" stroke="#d0d8db" stroke-width="1.5" stroke-linecap="round" stroke-linejoin="round"><path d="M20.25 8.511c.884.284 1.5 1.128 1.5 2.097v4.286c0 1.136-.847 2.1-1.98 2.193-.34.027-.68.052-1.02.072v3.091l-3-3c-1.354 0-2.694-.055-4.02-.163a2.115 2.115 0 01-.825-.242m9.345-8.334a2.126 2.126 0 00-.476-.095 48.64 48.64 0 00-8.048 0c-1.131.094-1.976 1.057-1.976 2.192v4.286c0 .837.46 1.58 1.155 1.951m9.345-8.334V6.637c0-1.621-1.152-3.026-2.76-3.235A48.455 48.455 0 0011.25 3c-2.115 0-4.198.137-6.24.402-1.608.209-2.76 1.614-2.76 3.235v6.226c0 1.621 1.152 3.026 2.76 3.235.577.075 1.157.14 1.74.194V21l4.155-4.155"/></svg>
<svg class="ic" style="left:91.20000000000005px;top:4.4px;width:8px;height:20px" viewBox="-4 -10 8 20"><circle cx="0" cy="-5.9" r="1.75" fill="#858b99"/><circle cx="0" cy="0" r="1.75" fill="#858b99"/><circle cx="0" cy="5.9" r="1.75" fill="#858b99"/></svg>
</div>
</div>
<div class="row" style="top:28.75px;background:#ffffff;border-bottom:1px solid #ececee">
<div class="c g" style="left:0px;width:150.5px">VO18-778Y</div>
<div class="c d" style="left:150.5px;width:384.0px">Extended Alloy Bracket Energy</div>
<div class="c " style="left:534.5px;width:84.0px">Make ...</div>
<div class="c " style="left:618.5px;width:139.0px">Finished Good</div>
<div class="c pl" style="left:757.5px;width:113.0px">GRP-Z</div>
<div class="c r" style="left:870.5px;width:89.0px">237.73</div>
<div class="c r" style="left:959.5px;width:93.0px">259.77</div>
<div class="c r" style="left:1052.5px;width:84.0px">0.43</div>
<div class="c red" style="left:1136.5px;width:76.5px">A</div>
<div class="c " style="left:1213px;width:75.5px">A-2</div>
<div class="c r b" style="left:1288.5px;width:84.0px">578</div>
<div class="c r" style="left:1372.5px;width:75.0px">600</div>
<div class="c wo" style="left:1447.5px;width:87.5px">1</div>
<div class="c r" style="left:1477.5px;width:117.0px;background:#ffffff;border-left:1px solid #e6e8ec;padding:0"><div style="position:absolute;left:0;top:0;right:1px;bottom:0;background:#ffffff;padding-right:9.5px">0.00</div></div>
<div class="c" style="left:1594.5px;width:125.0px;background:#ffffff;border-right:none">
<svg class="ic" style="left:47.5px;top:3.5px;width:20px;height:20px" viewBox="0 0 24 24" fill="none" stroke="#d0d8db" stroke-width="1.5" stroke-linecap="round" stroke-linejoin="round"><path d="M20.25 8.511c.884.284 1.5 1.128 1.5 2.097v4.286c0 1.136-.847 2.1-1.98 2.193-.34.027-.68.052-1.02.072v3.091l-3-3c-1.354 0-2.694-.055-4.02-.163a2.115 2.115 0 01-.825-.242m9.345-8.334a2.126 2.126 0 00-.476-.095 48.64 48.64 0 00-8.048 0c-1.131.094-1.976 1.057-1.976 2.192v4.286c0 .837.46 1.58 1.155 1.951m9.345-8.334V6.637c0-1.621-1.152-3.026-2.76-3.235A48.455 48.455 0 0011.25 3c-2.115 0-4.198.137-6.24.402-1.608.209-2.76 1.614-2.76 3.235v6.226c0 1.621 1.152 3.026 2.76 3.235.577.075 1.157.14 1.74.194V21l4.155-4.155"/></svg>
<svg class="ic" style="left:91.20000000000005px;top:4.4px;width:8px;height:20px" viewBox="-4 -10 8 20"><circle cx="0" cy="-5.9" r="1.75" fill="#858b99"/><circle cx="0" cy="0" r="1.75" fill="#858b99"/><circle cx="0" cy="5.9" r="1.75" fill="#858b99"/></svg>
</div>
</div>
<div class="row" style="top:57.50px;background:#f5f5f5;border-bottom:1px solid #ececee">
<div class="c g" style="left:0px;width:150.5px">VK48-799</div>
<div class="c d" style="left:150.5px;width:384.0px">Standard Alloy Component Aerospace</div>
<div class="c " style="left:534.5px;width:84.0px">Make ...</div>
<div class="c " style="left:618.5px;width:139.0px">Finished Good</div>
<div class="c pl" style="left:757.5px;width:113.0px">GRP-X-101</div>
<div class="c r" style="left:870.5px;width:89.0px">284.81</div>
<div class="c r" style="left:959.5px;width:93.0px">257.46</div>
<div class="c r" style="left:1052.5px;width:84.0px">0.28</div>
<div class="c red" style="left:1136.5px;width:76.5px">A</div>
<div class="c " style="left:1213px;width:75.5px">A-1</div>
<div class="c r b" style="left:1288.5px;width:84.0px">11,335</div>
<div class="c r" style="left:1372.5px;width:75.0px">0</div>
<div class="c wo" style="left:1447.5px;width:87.5px"></div>
<div class="c r" style="left:1477.5px;width:117.0px;background:#f5f5f5;border-left:1px solid #e6e8ec;padding:0"><div style="position:absolute;left:0;top:0;right:1px;bottom:0;background:#f5f5f5;padding-right:9.5px">0.00</div></div>
<div class="c" style="left:1594.5px;width:125.0px;background:#f5f5f5;border-right:none">
<svg class="ic" style="left:47.5px;top:3.5px;width:20px;height:20px" viewBox="0 0 24 24" fill="none" stroke="#d0d8db" stroke-width="1.5" stroke-linecap="round" stroke-linejoin="round"><path d="M20.25 8.511c.884.284 1.5 1.128 1.5 2.097v4.286c0 1.136-.847 2.1-1.98 2.193-.34.027-.68.052-1.02.072v3.091l-3-3c-1.354 0-2.694-.055-4.02-.163a2.115 2.115 0 01-.825-.242m9.345-8.334a2.126 2.126 0 00-.476-.095 48.64 48.64 0 00-8.048 0c-1.131.094-1.976 1.057-1.976 2.192v4.286c0 .837.46 1.58 1.155 1.951m9.345-8.334V6.637c0-1.621-1.152-3.026-2.76-3.235A48.455 48.455 0 0011.25 3c-2.115 0-4.198.137-6.24.402-1.608.209-2.76 1.614-2.76 3.235v6.226c0 1.621 1.152 3.026 2.76 3.235.577.075 1.157.14 1.74.194V21l4.155-4.155"/></svg>
<svg class="ic" style="left:91.20000000000005px;top:4.4px;width:8px;height:20px" viewBox="-4 -10 8 20"><circle cx="0" cy="-5.9" r="1.75" fill="#858b99"/><circle cx="0" cy="0" r="1.75" fill="#858b99"/><circle cx="0" cy="5.9" r="1.75" fill="#858b99"/></svg>
</div>
</div>
<div class="row" style="top:86.25px;background:#ffffff;border-bottom:1px solid #ececee">
<div class="c g" style="left:0px;width:150.5px">VM47-794</div>
<div class="c d" style="left:150.5px;width:384.0px">Enhanced Silicone Mount, Type J-327</div>
<div class="c " style="left:534.5px;width:84.0px">Make ...</div>
<div class="c " style="left:618.5px;width:139.0px">Finished Good</div>
<div class="c pl" style="left:757.5px;width:113.0px">GRP-Z</div>
<div class="c r" style="left:870.5px;width:89.0px">291.69</div>
<div class="c r" style="left:959.5px;width:93.0px">251.08</div>
<div class="c r" style="left:1052.5px;width:84.0px">2.27</div>
<div class="c " style="left:1136.5px;width:76.5px">OEM</div>
<div class="c " style="left:1213px;width:75.5px">A-4</div>
<div class="c r b" style="left:1288.5px;width:84.0px">38</div>
<div class="c r" style="left:1372.5px;width:75.0px">0</div>
<div class="c wo" style="left:1447.5px;width:87.5px"></div>
<div class="c r" style="left:1477.5px;width:117.0px;background:#ffffff;border-left:1px solid #e6e8ec;padding:0"><div style="position:absolute;left:-1px;top:0;right:1px;bottom:0;background:#ffedd5;padding-right:9.5px">1,980.00</div></div>
<div class="c" style="left:1594.5px;width:125.0px;background:#ffffff;border-right:none">
<svg class="ic" style="left:47.5px;top:3.5px;width:20px;height:20px" viewBox="0 0 24 24" fill="none" stroke="#d0d8db" stroke-width="1.5" stroke-linecap="round" stroke-linejoin="round"><path d="M20.25 8.511c.884.284 1.5 1.128 1.5 2.097v4.286c0 1.136-.847 2.1-1.98 2.193-.34.027-.68.052-1.02.072v3.091l-3-3c-1.354 0-2.694-.055-4.02-.163a2.115 2.115 0 01-.825-.242m9.345-8.334a2.126 2.126 0 00-.476-.095 48.64 48.64 0 00-8.048 0c-1.131.094-1.976 1.057-1.976 2.192v4.286c0 .837.46 1.58 1.155 1.951m9.345-8.334V6.637c0-1.621-1.152-3.026-2.76-3.235A48.455 48.455 0 0011.25 3c-2.115 0-4.198.137-6.24.402-1.608.209-2.76 1.614-2.76 3.235v6.226c0 1.621 1.152 3.026 2.76 3.235.577.075 1.157.14 1.74.194V21l4.155-4.155"/></svg>
<svg class="ic" style="left:91.20000000000005px;top:4.4px;width:8px;height:20px" viewBox="-4 -10 8 20"><circle cx="0" cy="-5.9" r="1.75" fill="#858b99"/><circle cx="0" cy="0" r="1.75" fill="#858b99"/><circle cx="0" cy="5.9" r="1.75" fill="#858b99"/></svg>
</div>
</div>
<div class="row" style="top:115.00px;background:#f5f5f5;border-bottom:1px solid #ececee">
<div class="c g" style="left:0px;width:150.5px">VM38-740</div>
<div class="c d" style="left:150.5px;width:384.0px">Element PTFE Tall, Model 80</div>
<div class="c " style="left:534.5px;width:84.0px">Make ...</div>
<div class="c " style="left:618.5px;width:139.0px">Finished Good</div>
<div class="c pl" style="left:757.5px;width:113.0px">GRP-X-101</div>
<div class="c r" style="left:870.5px;width:89.0px">255.56</div>
<div class="c r" style="left:959.5px;width:93.0px">226.77</div>
<div class="c r" style="left:1052.5px;width:84.0px">0.32</div>
<div class="c red" style="left:1136.5px;width:76.5px">A</div>
<div class="c " style="left:1213px;width:75.5px">A-2</div>
<div class="c r b" style="left:1288.5px;width:84.0px">4,906</div>
<div class="c r" style="left:1372.5px;width:75.0px">7,165</div>
<div class="c wo" style="left:1447.5px;width:87.5px"></div>
<div class="c r" style="left:1477.5px;width:117.0px;background:#f5f5f5;border-left:1px solid #e6e8ec;padding:0"><div style="position:absolute;left:0;top:0;right:1px;bottom:0;background:#f5f5f5;padding-right:9.5px">0.00</div></div>
<div class="c" style="left:1594.5px;width:125.0px;background:#f5f5f5;border-right:none">
<svg class="ic" style="left:47.5px;top:3.5px;width:20px;height:20px" viewBox="0 0 24 24" fill="none" stroke="#d0d8db" stroke-width="1.5" stroke-linecap="round" stroke-linejoin="round"><path d="M20.25 8.511c.884.284 1.5 1.128 1.5 2.097v4.286c0 1.136-.847 2.1-1.98 2.193-.34.027-.68.052-1.02.072v3.091l-3-3c-1.354 0-2.694-.055-4.02-.163a2.115 2.115 0 01-.825-.242m9.345-8.334a2.126 2.126 0 00-.476-.095 48.64 48.64 0 00-8.048 0c-1.131.094-1.976 1.057-1.976 2.192v4.286c0 .837.46 1.58 1.155 1.951m9.345-8.334V6.637c0-1.621-1.152-3.026-2.76-3.235A48.455 48.455 0 0011.25 3c-2.115 0-4.198.137-6.24.402-1.608.209-2.76 1.614-2.76 3.235v6.226c0 1.621 1.152 3.026 2.76 3.235.577.075 1.157.14 1.74.194V21l4.155-4.155"/></svg>
<svg class="ic" style="left:91.20000000000005px;top:4.4px;width:8px;height:20px" viewBox="-4 -10 8 20"><circle cx="0" cy="-5.9" r="1.75" fill="#858b99"/><circle cx="0" cy="0" r="1.75" fill="#858b99"/><circle cx="0" cy="5.9" r="1.75" fill="#858b99"/></svg>
</div>
</div>
<div class="row" style="top:143.75px;background:#cfdedb;border-bottom:1px solid #c5d3d0">
<div class="c g" style="left:0px;width:150.5px">VQ277-716</div>
<div class="c d" style="left:150.5px;width:384.0px">Precision PVC Adapter, Line W-157</div>
<div class="c " style="left:534.5px;width:84.0px">Make ...</div>
<div class="c " style="left:618.5px;width:139.0px;border:1px solid #0f8a5f;padding-left:9.5px;line-height:25.9px">Finished Good</div>
<div class="c pl" style="left:757.5px;width:113.0px">CAT-06</div>
<div class="c r" style="left:870.5px;width:89.0px">165.46</div>
<div class="c r" style="left:959.5px;width:93.0px">169.62</div>
<div class="c r" style="left:1052.5px;width:84.0px">0.56</div>
<div class="c red" style="left:1136.5px;width:76.5px">A</div>
<div class="c " style="left:1213px;width:75.5px">A-2</div>
<div class="c r b" style="left:1288.5px;width:84.0px">2,678</div>
<div class="c r" style="left:1372.5px;width:75.0px">3,042</div>
<div class="c wo" style="left:1447.5px;width:87.5px"></div>
<div class="c r" style="left:1477.5px;width:117.0px;background:#cfdedb;border-left:1px solid #e6e8ec;padding:0"><div style="position:absolute;left:0;top:0;right:1px;bottom:0;background:#cfdedb;padding-right:9.5px">0.00</div></div>
<div class="c" style="left:1594.5px;width:125.0px;background:#cfdedb;border-right:none">
<svg class="ic" style="left:91.20000000000005px;top:4.4px;width:8px;height:20px" viewBox="-4 -10 8 20"><circle cx="0" cy="-5.9" r="1.75" fill="#858b99"/><circle cx="0" cy="0" r="1.75" fill="#858b99"/><circle cx="0" cy="5.9" r="1.75" fill="#858b99"/></svg>
</div>
</div>
<div class="row" style="top:172.50px;background:#f5f5f5;border-bottom:1px solid #ececee">
<div class="c g" style="left:0px;width:150.5px">VO98-779</div>
<div class="c d" style="left:150.5px;width:384.0px">Ultra PTFE Base, Model H-582</div>
<div class="c " style="left:534.5px;width:84.0px">Make ...</div>
<div class="c " style="left:618.5px;width:139.0px">Finished Good</div>
<div class="c pl" style="left:757.5px;width:113.0px">GRP-Z</div>
<div class="c r" style="left:870.5px;width:89.0px">159.00</div>
<div class="c r" style="left:959.5px;width:93.0px">162.85</div>
<div class="c r" style="left:1052.5px;width:84.0px">0.60</div>
<div class="c red" style="left:1136.5px;width:76.5px">A</div>
<div class="c " style="left:1213px;width:75.5px">A-2</div>
<div class="c r b" style="left:1288.5px;width:84.0px">870</div>
<div class="c r" style="left:1372.5px;width:75.0px">0</div>
<div class="c wo" style="left:1447.5px;width:87.5px"></div>
<div class="c r" style="left:1477.5px;width:117.0px;background:#f5f5f5;border-left:1px solid #e6e8ec;padding:0"><div style="position:absolute;left:0;top:0;right:1px;bottom:0;background:#f5f5f5;padding-right:9.5px">0.00</div></div>
<div class="c" style="left:1594.5px;width:125.0px;background:#f5f5f5;border-right:none">
<svg class="ic" style="left:47.5px;top:3.5px;width:20px;height:20px" viewBox="0 0 24 24" fill="none" stroke="#d0d8db" stroke-width="1.5" stroke-linecap="round" stroke-linejoin="round"><path d="M20.25 8.511c.884.284 1.5 1.128 1.5 2.097v4.286c0 1.136-.847 2.1-1.98 2.193-.34.027-.68.052-1.02.072v3.091l-3-3c-1.354 0-2.694-.055-4.02-.163a2.115 2.115 0 01-.825-.242m9.345-8.334a2.126 2.126 0 00-.476-.095 48.64 48.64 0 00-8.048 0c-1.131.094-1.976 1.057-1.976 2.192v4.286c0 .837.46 1.58 1.155 1.951m9.345-8.334V6.637c0-1.621-1.152-3.026-2.76-3.235A48.455 48.455 0 0011.25 3c-2.115 0-4.198.137-6.24.402-1.608.209-2.76 1.614-2.76 3.235v6.226c0 1.621 1.152 3.026 2.76 3.235.577.075 1.157.14 1.74.194V21l4.155-4.155"/></svg>
<svg class="ic" style="left:91.20000000000005px;top:4.4px;width:8px;height:20px" viewBox="-4 -10 8 20"><circle cx="0" cy="-5.9" r="1.75" fill="#858b99"/><circle cx="0" cy="0" r="1.75" fill="#858b99"/><circle cx="0" cy="5.9" r="1.75" fill="#858b99"/></svg>
</div>
</div>
<div class="row" style="top:201.25px;background:#ffffff;border-bottom:1px solid #ececee">
<div class="c g" style="left:0px;width:150.5px">VQ87-711Y</div>
<div class="c d" style="left:150.5px;width:384.0px">Mount PVC Thin, Series 85</div>
<div class="c " style="left:534.5px;width:84.0px">Make ...</div>
<div class="c " style="left:618.5px;width:139.0px">Finished Good</div>
<div class="c pl" style="left:757.5px;width:113.0px">PRD-B</div>
<div class="c r" style="left:870.5px;width:89.0px">161.54</div>
<div class="c r" style="left:959.5px;width:93.0px">155.08</div>
<div class="c r" style="left:1052.5px;width:84.0px">2.21</div>
<div class="c " style="left:1136.5px;width:76.5px">REST...</div>
<div class="c " style="left:1213px;width:75.5px">A-4</div>
<div class="c r b" style="left:1288.5px;width:84.0px">135</div>
<div class="c r" style="left:1372.5px;width:75.0px">0</div>
<div class="c wo" style="left:1447.5px;width:87.5px"></div>
<div class="c r" style="left:1477.5px;width:117.0px;background:#ffffff;border-left:1px solid #e6e8ec;padding:0"><div style="position:absolute;left:-1px;top:0;right:1px;bottom:0;background:#ffedd5;padding-right:9.5px">980.00</div></div>
<div class="c" style="left:1594.5px;width:125.0px;background:#ffffff;border-right:none">
<svg class="ic" style="left:47.5px;top:3.5px;width:20px;height:20px" viewBox="0 0 24 24" fill="none" stroke="#d0d8db" stroke-width="1.5" stroke-linecap="round" stroke-linejoin="round"><path d="M20.25 8.511c.884.284 1.5 1.128 1.5 2.097v4.286c0 1.136-.847 2.1-1.98 2.193-.34.027-.68.052-1.02.072v3.091l-3-3c-1.354 0-2.694-.055-4.02-.163a2.115 2.115 0 01-.825-.242m9.345-8.334a2.126 2.126 0 00-.476-.095 48.64 48.64 0 00-8.048 0c-1.131.094-1.976 1.057-1.976 2.192v4.286c0 .837.46 1.58 1.155 1.951m9.345-8.334V6.637c0-1.621-1.152-3.026-2.76-3.235A48.455 48.455 0 0011.25 3c-2.115 0-4.198.137-6.24.402-1.608.209-2.76 1.614-2.76 3.235v6.226c0 1.621 1.152 3.026 2.76 3.235.577.075 1.157.14 1.74.194V21l4.155-4.155"/></svg>
<svg class="ic" style="left:91.20000000000005px;top:4.4px;width:8px;height:20px" viewBox="-4 -10 8 20"><circle cx="0" cy="-5.9" r="1.75" fill="#858b99"/><circle cx="0" cy="0" r="1.75" fill="#858b99"/><circle cx="0" cy="5.9" r="1.75" fill="#858b99"/></svg>
</div>
</div>
<div class="row" style="top:230.00px;background:#f5f5f5;border-bottom:1px solid #ececee">
<div class="c g" style="left:0px;width:150.5px">VG187-741</div>
<div class="c d" style="left:150.5px;width:384.0px">Titanium System - Standard Pro-Grade</div>
<div class="c " style="left:534.5px;width:84.0px">Make ...</div>
<div class="c " style="left:618.5px;width:139.0px">Finished Good</div>
<div class="c pl" style="left:757.5px;width:113.0px">GRP-X-101</div>
<div class="c r" style="left:870.5px;width:89.0px">168.21</div>
<div class="c r" style="left:959.5px;width:93.0px">154.69</div>
<div class="c r" style="left:1052.5px;width:84.0px">0.48</div>
<div class="c red" style="left:1136.5px;width:76.5px">A</div>
<div class="c " style="left:1213px;width:75.5px">A-2</div>
<div class="c r b" style="left:1288.5px;width:84.0px">5,418</div>
<div class="c r" style="left:1372.5px;width:75.0px">5,835</div>
<div class="c wo" style="left:1447.5px;width:87.5px"></div>
<div class="c r" style="left:1477.5px;width:117.0px;background:#f5f5f5;border-left:1px solid #e6e8ec;padding:0"><div style="position:absolute;left:0;top:0;right:1px;bottom:0;background:#f5f5f5;padding-right:9.5px">0.00</div></div>
<div class="c" style="left:1594.5px;width:125.0px;background:#f5f5f5;border-right:none">
<svg class="ic" style="left:47.5px;top:3.5px;width:20px;height:20px" viewBox="0 0 24 24" fill="none" stroke="#d0d8db" stroke-width="1.5" stroke-linecap="round" stroke-linejoin="round"><path d="M20.25 8.511c.884.284 1.5 1.128 1.5 2.097v4.286c0 1.136-.847 2.1-1.98 2.193-.34.027-.68.052-1.02.072v3.091l-3-3c-1.354 0-2.694-.055-4.02-.163a2.115 2.115 0 01-.825-.242m9.345-8.334a2.126 2.126 0 00-.476-.095 48.64 48.64 0 00-8.048 0c-1.131.094-1.976 1.057-1.976 2.192v4.286c0 .837.46 1.58 1.155 1.951m9.345-8.334V6.637c0-1.621-1.152-3.026-2.76-3.235A48.455 48.455 0 0011.25 3c-2.115 0-4.198.137-6.24.402-1.608.209-2.76 1.614-2.76 3.235v6.226c0 1.621 1.152 3.026 2.76 3.235.577.075 1.157.14 1.74.194V21l4.155-4.155"/></svg>
<svg class="ic" style="left:91.20000000000005px;top:4.4px;width:8px;height:20px" viewBox="-4 -10 8 20"><circle cx="0" cy="-5.9" r="1.75" fill="#858b99"/><circle cx="0" cy="0" r="1.75" fill="#858b99"/><circle cx="0" cy="5.9" r="1.75" fill="#858b99"/></svg>
</div>
</div>
<div class="row" style="top:258.75px;background:#ffffff;border-bottom:1px solid #ececee">
<div class="c g" style="left:0px;width:150.5px">VG968-773</div>
<div class="c d" style="left:150.5px;width:384.0px">Stainless Unit - Standard Standard</div>
<div class="c " style="left:534.5px;width:84.0px">Make ...</div>
<div class="c " style="left:618.5px;width:139.0px">Finished Good</div>
<div class="c pl" style="left:757.5px;width:113.0px">LN-200-101</div>
<div class="c r" style="left:870.5px;width:89.0px">158.92</div>
<div class="c r" style="left:959.5px;width:93.0px">137.23</div>
<div class="c r" style="left:1052.5px;width:84.0px">0.42</div>
<div class="c red" style="left:1136.5px;width:76.5px">A</div>
<div class="c " style="left:1213px;width:75.5px">A-2</div>
<div class="c r b" style="left:1288.5px;width:84.0px">9,322</div>
<div class="c r" style="left:1372.5px;width:75.0px">8,303</div>
<div class="c wo" style="left:1447.5px;width:87.5px"></div>
<div class="c r" style="left:1477.5px;width:117.0px;background:#ffffff;border-left:1px solid #e6e8ec;padding:0"><div style="position:absolute;left:0;top:0;right:1px;bottom:0;background:#ffffff;padding-right:9.5px">0.00</div></div>
<div class="c" style="left:1594.5px;width:125.0px;background:#ffffff;border-right:none">
<svg class="ic" style="left:47.5px;top:3.5px;width:20px;height:20px" viewBox="0 0 24 24" fill="none" stroke="#d0d8db" stroke-width="1.5" stroke-linecap="round" stroke-linejoin="round"><path d="M20.25 8.511c.884.284 1.5 1.128 1.5 2.097v4.286c0 1.136-.847 2.1-1.98 2.193-.34.027-.68.052-1.02.072v3.091l-3-3c-1.354 0-2.694-.055-4.02-.163a2.115 2.115 0 01-.825-.242m9.345-8.334a2.126 2.126 0 00-.476-.095 48.64 48.64 0 00-8.048 0c-1.131.094-1.976 1.057-1.976 2.192v4.286c0 .837.46 1.58 1.155 1.951m9.345-8.334V6.637c0-1.621-1.152-3.026-2.76-3.235A48.455 48.455 0 0011.25 3c-2.115 0-4.198.137-6.24.402-1.608.209-2.76 1.614-2.76 3.235v6.226c0 1.621 1.152 3.026 2.76 3.235.577.075 1.157.14 1.74.194V21l4.155-4.155"/></svg>
<svg class="ic" style="left:91.20000000000005px;top:4.4px;width:8px;height:20px" viewBox="-4 -10 8 20"><circle cx="0" cy="-5.9" r="1.75" fill="#858b99"/><circle cx="0" cy="0" r="1.75" fill="#858b99"/><circle cx="0" cy="5.9" r="1.75" fill="#858b99"/></svg>
</div>
</div>
<div class="row" style="top:287.50px;background:#f5f5f5;border-bottom:1px solid #ececee">
<div class="c g" style="left:0px;width:150.5px">VG587-772</div>
<div class="c d" style="left:150.5px;width:384.0px">Unit Titanium Oversized, Grade 83</div>
<div class="c " style="left:534.5px;width:84.0px">Make ...</div>
<div class="c " style="left:618.5px;width:139.0px">Finished Good</div>
<div class="c pl" style="left:757.5px;width:113.0px">GRP-X-101</div>
<div class="c r" style="left:870.5px;width:89.0px">146.69</div>
<div class="c r" style="left:959.5px;width:93.0px">124.31</div>
<div class="c r" style="left:1052.5px;width:84.0px">0.37</div>
<div class="c red" style="left:1136.5px;width:76.5px">A</div>
<div class="c " style="left:1213px;width:75.5px">A-2</div>
<div class="c r b" style="left:1288.5px;width:84.0px">2,947</div>
<div class="c r" style="left:1372.5px;width:75.0px">8,190</div>
<div class="c wo" style="left:1447.5px;width:87.5px"></div>
<div class="c r" style="left:1477.5px;width:117.0px;background:#f5f5f5;border-left:1px solid #e6e8ec;padding:0"><div style="position:absolute;left:0;top:0;right:1px;bottom:0;background:#f5f5f5;padding-right:9.5px">0.00</div></div>
<div class="c" style="left:1594.5px;width:125.0px;background:#f5f5f5;border-right:none">
<svg class="ic" style="left:47.5px;top:3.5px;width:20px;height:20px" viewBox="0 0 24 24" fill="none" stroke="#d0d8db" stroke-width="1.5" stroke-linecap="round" stroke-linejoin="round"><path d="M20.25 8.511c.884.284 1.5 1.128 1.5 2.097v4.286c0 1.136-.847 2.1-1.98 2.193-.34.027-.68.052-1.02.072v3.091l-3-3c-1.354 0-2.694-.055-4.02-.163a2.115 2.115 0 01-.825-.242m9.345-8.334a2.126 2.126 0 00-.476-.095 48.64 48.64 0 00-8.048 0c-1.131.094-1.976 1.057-1.976 2.192v4.286c0 .837.46 1.58 1.155 1.951m9.345-8.334V6.637c0-1.621-1.152-3.026-2.76-3.235A48.455 48.455 0 0011.25 3c-2.115 0-4.198.137-6.24.402-1.608.209-2.76 1.614-2.76 3.235v6.226c0 1.621 1.152 3.026 2.76 3.235.577.075 1.157.14 1.74.194V21l4.155-4.155"/></svg>
<svg class="ic" style="left:91.20000000000005px;top:4.4px;width:8px;height:20px" viewBox="-4 -10 8 20"><circle cx="0" cy="-5.9" r="1.75" fill="#858b99"/><circle cx="0" cy="0" r="1.75" fill="#858b99"/><circle cx="0" cy="5.9" r="1.75" fill="#858b99"/></svg>
</div>
</div>
<div class="row" style="top:316.25px;background:#ffffff;border-bottom:1px solid #ececee">
<div class="c g" style="left:0px;width:150.5px">VG4777-741</div>
<div class="c d" style="left:150.5px;width:384.0px">Unit Stainless Small, Series 88</div>
<div class="c " style="left:534.5px;width:84.0px">Make ...</div>
<div class="c " style="left:618.5px;width:139.0px">Finished Good</div>
<div class="c pl" style="left:757.5px;width:113.0px">GRP-X-101</div>
<div class="c r" style="left:870.5px;width:89.0px">114.21</div>
<div class="c r" style="left:959.5px;width:93.0px">119.54</div>
<div class="c r" style="left:1052.5px;width:84.0px">0.55</div>
<div class="c red" style="left:1136.5px;width:76.5px">A</div>
<div class="c " style="left:1213px;width:75.5px">A-2</div>
<div class="c r b" style="left:1288.5px;width:84.0px">2,828</div>
<div class="c r" style="left:1372.5px;width:75.0px">2,853</div>
<div class="c wo" style="left:1447.5px;width:87.5px"></div>
<div class="c r" style="left:1477.5px;width:117.0px;background:#ffffff;border-left:1px solid #e6e8ec;padding:0"><div style="position:absolute;left:0;top:0;right:1px;bottom:0;background:#ffffff;padding-right:9.5px">0.00</div></div>
<div class="c" style="left:1594.5px;width:125.0px;background:#ffffff;border-right:none">
<svg class="ic" style="left:47.5px;top:3.5px;width:20px;height:20px" viewBox="0 0 24 24" fill="none" stroke="#d0d8db" stroke-width="1.5" stroke-linecap="round" stroke-linejoin="round"><path d="M20.25 8.511c.884.284 1.5 1.128 1.5 2.097v4.286c0 1.136-.847 2.1-1.98 2.193-.34.027-.68.052-1.02.072v3.091l-3-3c-1.354 0-2.694-.055-4.02-.163a2.115 2.115 0 01-.825-.242m9.345-8.334a2.126 2.126 0 00-.476-.095 48.64 48.64 0 00-8.048 0c-1.131.094-1.976 1.057-1.976 2.192v4.286c0 .837.46 1.58 1.155 1.951m9.345-8.334V6.637c0-1.621-1.152-3.026-2.76-3.235A48.455 48.455 0 0011.25 3c-2.115 0-4.198.137-6.24.402-1.608.209-2.76 1.614-2.76 3.235v6.226c0 1.621 1.152 3.026 2.76 3.235.577.075 1.157.14 1.74.194V21l4.155-4.155"/></svg>
<svg class="ic" style="left:91.20000000000005px;top:4.4px;width:8px;height:20px" viewBox="-4 -10 8 20"><circle cx="0" cy="-5.9" r="1.75" fill="#858b99"/><circle cx="0" cy="0" r="1.75" fill="#858b99"/><circle cx="0" cy="5.9" r="1.75" fill="#858b99"/></svg>
</div>
</div>
</div>
<div class="abs" style="left:1719.5px;top:101px;width:19.5px;height:330px;background:#f1f3f7"></div>
<svg class="ic" style="left:1723px;top:108.60000000000002px;width:10px;height:7px" viewBox="0 0 10 7"><path d="M0.8 6.6L5 0.4L9.2 6.6Z" fill="#8a94a6" stroke="#8a94a6" stroke-width=".8" stroke-linejoin="round"/></svg>
<div class="abs" style="left:1723px;top:124px;width:11px;height:57.5px;border-radius:5.5px;background:#93a1b8"></div>
<svg class="ic" style="left:1723px;top:416px;width:10px;height:7px" viewBox="0 0 10 7"><path d="M0 0L5 7L10 0Z" fill="#8a94a6"/></svg>
<div class="abs" style="left:0;top:431px;width:1739px;height:20px;background:#f1f3f7;border-bottom:1px solid #e2e5ea"></div>
<svg class="ic" style="left:9px;top:435px;width:8px;height:10px" viewBox="0 0 8 10"><path d="M8 0L0 5L8 10Z" fill="#8a94a6"/></svg>
<svg class="ic" style="left:134px;top:435px;width:8px;height:10px" viewBox="0 0 8 10"><path d="M0 0L8 5L0 10Z" fill="#8a94a6"/></svg>
<svg class="ic" style="left:159px;top:435px;width:8px;height:10px" viewBox="0 0 8 10"><path d="M8 0L0 5L8 10Z" fill="#8a94a6"/></svg>
<svg class="ic" style="left:1462px;top:435px;width:8px;height:10px" viewBox="0 0 8 10"><path d="M0 0L8 5L0 10Z" fill="#8a94a6"/></svg>
<svg class="ic" style="left:1485px;top:435px;width:8px;height:10px" viewBox="0 0 8 10"><path d="M8 0L0 5L8 10Z" fill="#8a94a6"/></svg>
<svg class="ic" style="left:1722px;top:435px;width:8px;height:10px" viewBox="0 0 8 10"><path d="M0 0L8 5L0 10Z" fill="#8a94a6"/></svg>
<div class="abs" style="left:150.5px;top:431px;width:1px;height:19px;background:#e2e5ea"></div>
<div class="abs" style="left:1477.5px;top:431px;width:1px;height:19px;background:#e2e5ea"></div>
<div class="abs" style="left:174px;top:435px;width:848px;height:10px;border-radius:5px;background:#93a1b8"></div>
</div>
<div class="abs" id="sbar" style="left:1823px;top:736px;width:32px;height:451px;background:#f9fafb;border-left:1px solid #e2e5ea;border-bottom:1px solid #e2e5ea;font-size:17px;color:#181d1f">
<div class="t" style="left:13.8px;top:54.5px;transform-origin:0 0;transform:rotate(90deg) translateY(-50%);font-size:15.5px;line-height:20px;letter-spacing:.1px">Columns</div>
<div class="t" style="left:13.8px;top:165.20000000000005px;transform-origin:0 0;transform:rotate(90deg) translateY(-50%);font-size:15.5px;line-height:20px;letter-spacing:.1px">Filters</div>
<div class="t" style="left:13.8px;top:266.5px;transform-origin:0 0;transform:rotate(90deg) translateY(-50%);font-size:15.5px;line-height:20px;letter-spacing:.1px">Visuals</div>
<div class="t" style="left:13.8px;top:369.5px;transform-origin:0 0;transform:rotate(90deg) translateY(-50%);font-size:15.5px;line-height:20px;letter-spacing:.1px">Settings</div>
<svg class="ic" style="left:8.2px;top:32px;width:15px;height:13px" viewBox="0 0 15 13" fill="none" stroke="#181d1f" stroke-width="1.4"><rect x="1.7" y="1.7" width="11.6" height="9"/><line x1="1.7" y1="3.4" x2="13.3" y2="3.4"/><line x1="5.6" y1="3" x2="5.6" y2="10.7"/><line x1="9.4" y1="3" x2="9.4" y2="10.7"/></svg>
<svg class="ic" style="left:8.40px;top:147.50px;width:16px;height:16px" viewBox="0 0 24 24" fill="none" stroke="#181d1f" stroke-width="1.9" stroke-linejoin="round"><polygon points="2,3.2 22,3.2 14,12.4 14,17.6 10,20.2 10,12.4"/></svg>
<svg class="ic" style="left:11px;top:243px;width:13px;height:13px" viewBox="0 0 13 13" fill="#181d1f"><rect x="1" y="7.8" width="2.7" height="5"/><rect x="5" y="2.4" width="2.7" height="10.4"/><rect x="8.9" y="6.3" width="2.6" height="6.5"/></svg>
<svg class="ic" style="left:7px;top:342px;width:20px;height:18px" viewBox="0 0 20 18" fill="none" stroke="#181d1f" stroke-width="1.3"><line x1="1.2" y1="5.1" x2="18.8" y2="5.1"/><line x1="1.2" y1="13.5" x2="18.8" y2="13.5"/><circle cx="12.7" cy="5.1" r="2.5" fill="#f9fafb"/><circle cx="6.7" cy="13.5" r="2.5" fill="#f9fafb"/></svg>
</div>
<div class="abs" style="left:85px;top:1187px;width:1770px;height:45px;background:#f9fafb"></div>
<div class="t" id="rows" style="left:130.5px;top:1201.5px;font-size:15px;line-height:17px;font-weight:400;-webkit-text-stroke:.55px #181d1f;color:#181d1f;letter-spacing:.1px">Rows: 56</div>
<div class="abs" style="left:0;top:0;width:1855px;height:1232px;border-radius:9px;box-shadow:inset 0 1px 0 rgba(0,0,0,.045), inset 1px 0 0 rgba(0,0,0,.03);pointer-events:none"></div>
</body></html>
